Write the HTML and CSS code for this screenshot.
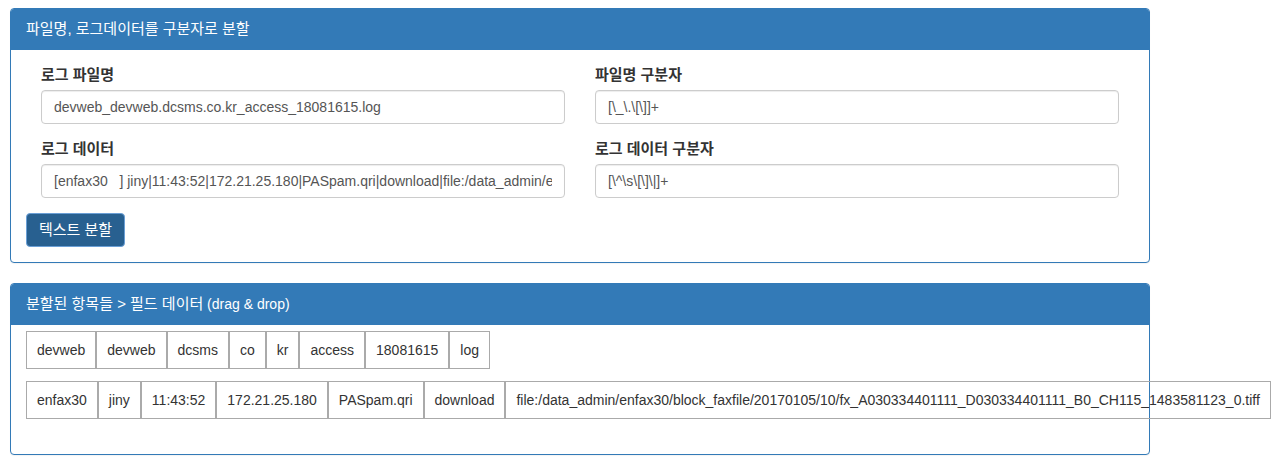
FILE: index.html
```html
<!DOCTYPE html>
<html lang="ko">
<head>
<meta charset="utf-8">
<title>로그 분할</title>
<link rel="stylesheet" href="styles.css">
</head>
<body>
<div class="page">
  <section class="panel">
    <div class="panel-heading"><span class="ko">파일명, 로그데이터를 구분자로 분할</span></div>
    <div class="panel-body">
      <div class="form-wrap">
        <div class="row">
          <div class="col">
            <div class="form-group">
              <label class="label"><span class="ko">로그 파일명</span></label>
              <input class="input" type="text" value="devweb_devweb.dcsms.co.kr_access_18081615.log">
            </div>
            <div class="form-group">
              <label class="label"><span class="ko">로그 데이터</span></label>
              <input class="input" type="text" value="[enfax30   ] jiny|11:43:52|172.21.25.180|PASpam.qri|download|file:/data_admin/enfax30/block_faxfile/20170105/10/fx_A030334401111_D030334401111_B0_CH115_1483581123_0.tiff">
            </div>
          </div>
          <div class="col">
            <div class="form-group">
              <label class="label"><span class="ko">파일명 구분자</span></label>
              <input class="input" type="text" value="[\_\.\[\]]+">
            </div>
            <div class="form-group">
              <label class="label"><span class="ko">로그 데이터 구분자</span></label>
              <input class="input" type="text" value="[\^\s\[\]\|]+">
            </div>
          </div>
        </div>
      </div>
      <button class="btn" type="button"><span class="ko">텍스트 분할</span></button>
    </div>
  </section>

  <section class="panel">
    <div class="panel-heading"><span class="ko">분할된 항목들 &gt; 필드 데이터</span> (drag &amp; drop)</div>
    <div class="panel-body fields">
      <div class="field-row">
        <span class="cell">devweb</span><span class="cell">devweb</span><span class="cell">dcsms</span><span class="cell">co</span><span class="cell">kr</span><span class="cell">access</span><span class="cell">18081615</span><span class="cell">log</span>
      </div>
      <div class="field-row">
        <span class="cell">enfax30</span><span class="cell">jiny</span><span class="cell">11:43:52</span><span class="cell">172.21.25.180</span><span class="cell">PASpam.qri</span><span class="cell">download</span><span class="cell">file:/data_admin/enfax30/block_faxfile/20170105/10/fx_A030334401111_D030334401111_B0_CH115_1483581123_0.tiff</span>
      </div>
    </div>
  </section>
</div>
</body>
</html>
```

FILE: styles.css
```css
* { box-sizing: border-box; }
html, body { margin: 0; padding: 0; background: #fff; }
body {
  font-family: "Liberation Sans", Arial, "Noto Sans CJK KR", sans-serif;
  font-size: 14px;
  line-height: 20px;
  color: #333;
}
.ko {
  font-size: 15px;
  line-height: 1;
}
.page {
  width: 1160px;
  padding: 8px 10px;
}
.panel {
  border: 1px solid #337ab7;
  border-radius: 4px;
  background: #fff;
  box-shadow: 0 1px 1px rgba(0,0,0,.05);
  margin-bottom: 20px;
}
.panel-heading {
  background: #337ab7;
  color: #fff;
  padding: 10px 15px;
  height: 41px;
  border-bottom: 1px solid #337ab7;
  border-radius: 3px 3px 0 0;
  line-height: 20px;
}
.panel-body {
  padding: 15px;
}
.form-wrap {
  padding: 0 15px;
}
.row {
  display: flex;
  margin: 0 -15px;
}
.col {
  flex: 1 1 0;
  padding: 0 15px;
}
.form-group {
  margin-bottom: 15px;
}
.label {
  display: block;
  height: 20px;
  font-weight: bold;
  margin-bottom: 5px;
  line-height: 20px;
}
.input {
  display: block;
  width: 100%;
  height: 34px;
  padding: 6px 12px;
  font-family: inherit;
  font-size: 14px;
  line-height: 20px;
  color: #555;
  background: #fff;
  border: 1px solid #ccc;
  border-radius: 4px;
  box-shadow: inset 0 1px 1px rgba(0,0,0,.075);
}
.btn {
  display: block;
  height: 34px;
  padding: 6px 12px;
  font-family: inherit;
  font-size: 14px;
  line-height: 20px;
  color: #fff;
  background: #286090;
  border: 1px solid #6a9fd6;
  border-radius: 4px;
  cursor: pointer;
}
.fields {
  padding: 6px 15px 35px;
  display: flex;
  flex-direction: column;
  gap: 12px;
}
.field-row {
  display: flex;
}
.cell {
  flex: 0 0 auto;
  white-space: nowrap;
  padding: 8px 10px;
  line-height: 20px;
  border: 1px solid #aaa;
  color: #333;
}
```
